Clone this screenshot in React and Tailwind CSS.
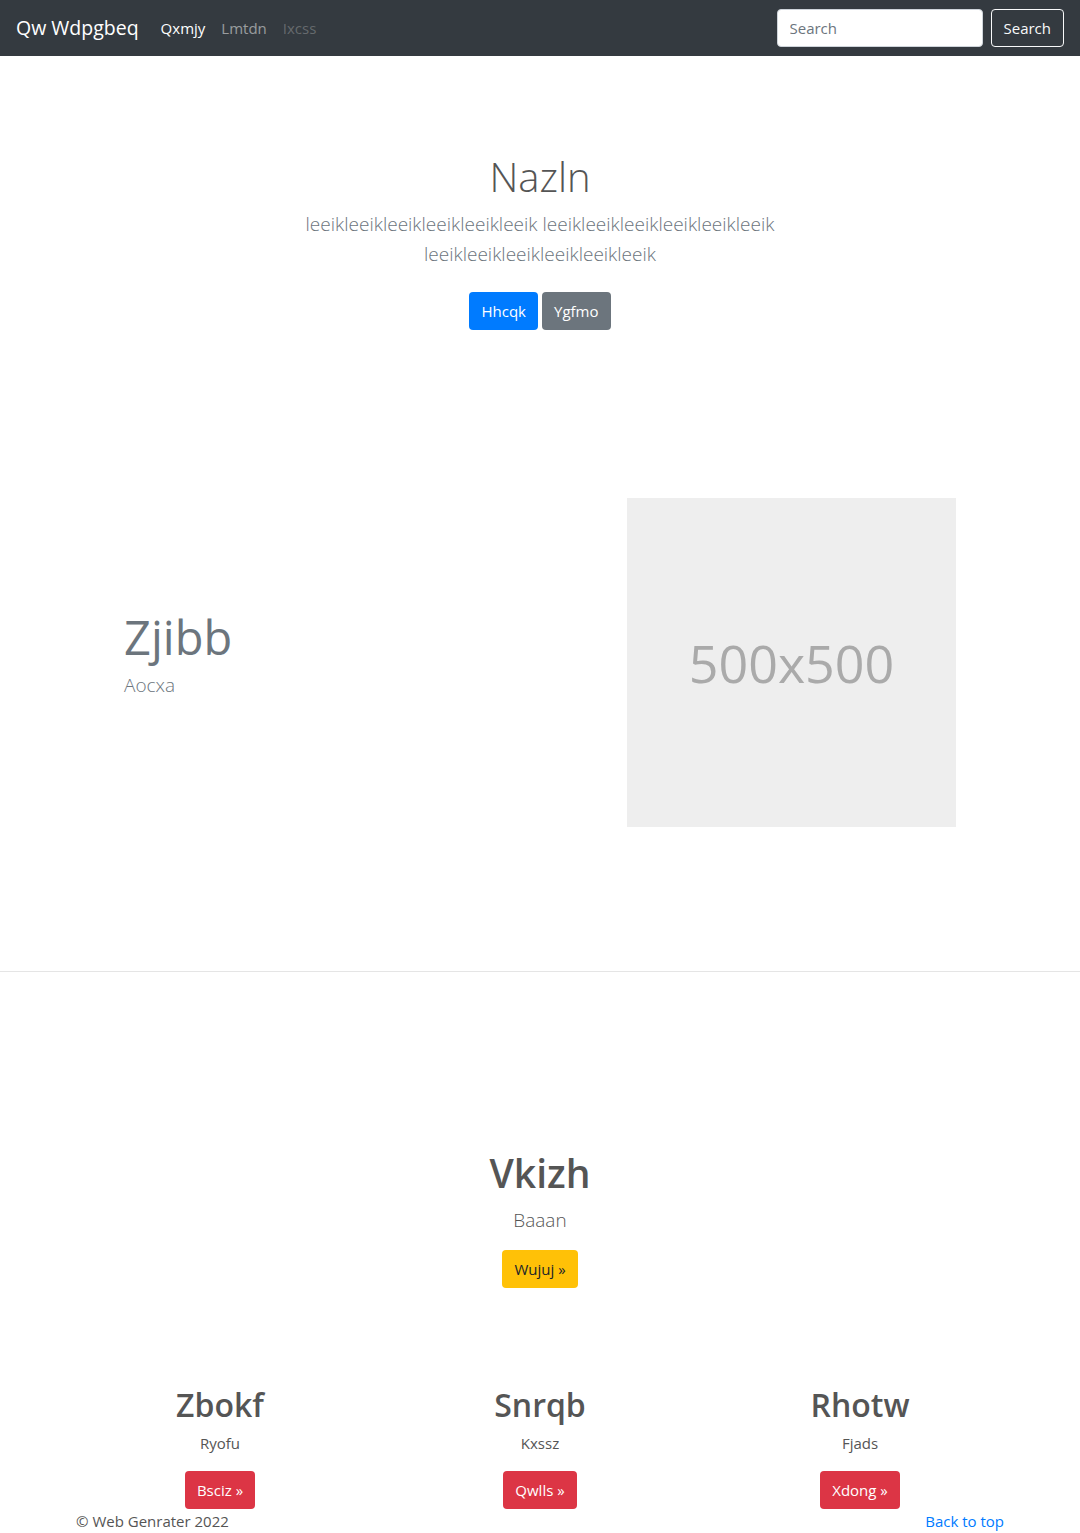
import React from 'react';

const features = [
    { title: 'Zbokf', text: 'Ryofu', cta: 'Bsciz' },
    { title: 'Snrqb', text: 'Kxssz', cta: 'Qwlls' },
    { title: 'Rhotw', text: 'Fjads', cta: 'Xdong' },
];

const App = () => {
    return (
        <div className="min-h-screen bg-white font-['Open_Sans',sans-serif] text-[#212529]">
            {/* Navbar */}
            <nav className="h-14 bg-[#343a40] px-4 flex items-center justify-between">
                <div className="flex items-center">
                    <a href="#" className="text-[19.5px] text-white mr-[14px] leading-[30px]">Qw Wdpgbeq</a>
                    <ul className="flex items-center text-[15px]">
                        <li><a href="#" className="block px-2 text-white">Qxmjy</a></li>
                        <li><a href="#" className="block px-2 text-white/50">Lmtdn</a></li>
                        <li><span className="block px-2 text-white/25">Ixcss</span></li>
                    </ul>
                </div>
                <form className="flex items-center gap-2" onSubmit={(e) => e.preventDefault()}>
                    <input
                        type="text"
                        placeholder="Search"
                        className="w-[206px] h-[38px] rounded bg-white border border-[#ced4da] px-3 text-[15px] text-[#495057] placeholder:text-[#6c757d] outline-none"
                    />
                    <button className="h-[38px] px-3 rounded border border-[#f8f9fa] text-[#f8f9fa] text-[15px]">Search</button>
                </form>
            </nav>

            {/* Hero */}
            <section className="pt-[97px] text-center">
                <div className="max-w-[480px] mx-auto">
                    <h1 className="text-[40px] font-light leading-[48px] text-[#555] mb-2">Nazln</h1>
                    <p className="text-[19px] font-light leading-[30px] text-[#6c757d]">
                        leeikleeikleeikleeikleeikleeik leeikleeikleeikleeikleeikleeik leeikleeikleeikleeikleeikleeik
                    </p>
                    <div className="flex justify-center gap-1 mt-[23px]">
                        <a href="#" className="h-[38px] px-3 flex items-center rounded bg-[#007bff] text-white text-[15px]">Hhcqk</a>
                        <a href="#" className="h-[38px] px-3 flex items-center rounded bg-[#6c757d] text-white text-[15px]">Ygfmo</a>
                    </div>
                </div>
            </section>

            {/* Featurette */}
            <section className="px-[124px] pt-[168px] pb-[144px] flex items-center justify-between">
                <div className="pb-[18px]">
                    <h2 className="text-[47px] font-normal leading-[56px] text-[#6c757d] mb-[6px]">Zjibb</h2>
                    <p className="text-[19px] font-light leading-[28px] text-[#6c757d]">Aocxa</p>
                </div>
                <div className="w-[329px] h-[329px] bg-[#eee] flex items-center justify-center">
                    <span className="text-[52px] text-[#aaa]">500x500</span>
                </div>
            </section>

            <hr className="border-0 border-t border-[#e5e5e5]" />

            {/* Marketing */}
            <section className="pt-[177px] text-center">
                <h2 className="text-[39px] font-semibold leading-[48px] text-[#555]">Vkizh</h2>
                <p className="text-[19px] font-light leading-[30px] text-[#555] mt-2">Baaan</p>
                <div className="flex justify-center mt-[15px]">
                    <a href="#" className="h-[38px] px-3 flex items-center rounded bg-[#ffc107] text-[#212529] text-[15px]">Wujuj &raquo;</a>
                </div>
            </section>

            <div className="max-w-[960px] mx-auto grid grid-cols-3 mt-[98px] text-center">
                {features.map((f) => (
                    <div key={f.title} className="px-4">
                        <h3 className="text-[32px] font-semibold leading-[38px] text-[#555]">{f.title}</h3>
                        <p className="text-[15px] leading-6 text-[#555] mt-[7px]">{f.text}</p>
                        <div className="flex justify-center mt-4">
                            <a href="#" className="h-[38px] px-3 flex items-center rounded bg-[#dc3545] text-white text-[15px]">{f.cta} &raquo;</a>
                        </div>
                    </div>
                ))}
            </div>

            {/* Footer */}
            <footer className="max-w-[960px] mx-auto px-4 flex justify-between text-[15px] leading-6 text-[#555]">
                <p>&copy; Web Genrater 2022</p>
                <a href="#" className="text-[#007bff]">Back to top</a>
            </footer>
        </div>
    );
};

export default App;
